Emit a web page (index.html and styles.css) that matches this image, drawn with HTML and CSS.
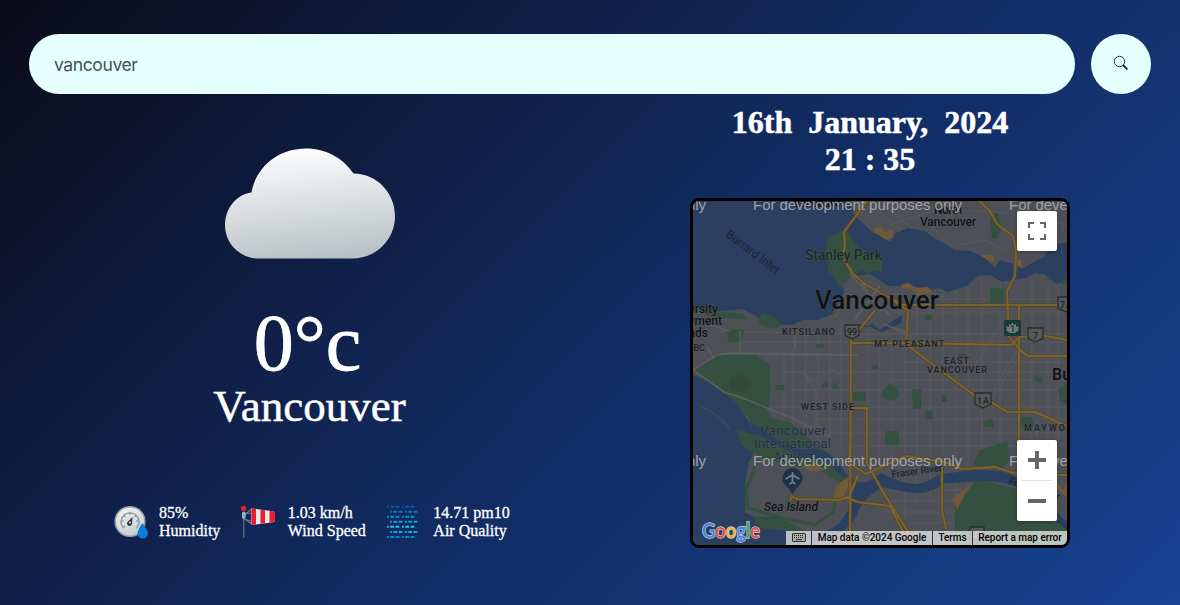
FILE: index.html
```html
<!DOCTYPE html>
<html lang="en">
<head>
<meta charset="utf-8">
<title>Weather</title>
<link rel="stylesheet" href="styles.css">
</head>
<body>
<form class="search">
  <input class="search-input" type="text" value="vancouver" aria-label="City">
  <button class="search-button" type="button" aria-label="Search">
    <svg width="16" height="16" viewBox="0 0 16 16"><circle cx="6.5" cy="6.5" r="5.2" fill="none" stroke="#20302e" stroke-width="1"/><path d="M10.4 10.4L14 14" stroke="#111" stroke-width="1.7" stroke-linecap="round"/></svg>
  </button>
</form>
<main class="content">
  <section class="weather">
    <svg class="cloud" width="170" height="111" viewBox="0 0 170 111">
      <defs><linearGradient id="cloud" x1=".42" y1="0" x2=".58" y2="1"><stop offset="0" stop-color="#fdfdfe"/><stop offset="1" stop-color="#b9c1c4"/></linearGradient></defs>
      <path d="M33.500 110.500C15 110.500 0 95.500 0 77.500C0 60 11.500 46.500 26.500 44.500C31 19 53 .500 81 .500C101 .500 118 10 128.500 25.500C152 25.500 170 45 170 68C170 92 151 110.500 127 110.500Z" fill="url(#cloud)"/>
    </svg>
    <div class="temperature">0°c</div>
    <div class="city">Vancouver</div>
    <div class="stats">
      <div class="stat">
        <svg width="36" height="36" viewBox="0 0 36 36">
          <defs><linearGradient id="metal" x1="0" y1="0" x2=".4" y2="1"><stop offset="0" stop-color="#f5f5f5"/><stop offset="1" stop-color="#c8cfd2"/></linearGradient></defs>
          <circle cx="20" cy="17.500" r="14.800" fill="url(#metal)" stroke="#98a0a5" stroke-width="1.600"/>
          <path d="M13.500 24A9 9 0 1 1 26.500 24" fill="none" stroke="#87939b" stroke-width="1.300"/>
          <path d="M20 8V11M11 17H14M26 17h3M13.500 11l2 2M26.500 11l-2 2M13 24l2-2" stroke="#87939b" stroke-width="1.200"/>
          <path d="M22.500 13L18 17.500a2.500 2.500 0 1 0 4 2.500Z" fill="#32383d"/><circle cx="20" cy="18.500" r="1.100" fill="#ccd2d6"/>
          <path d="M32.500 19C30 23 27.500 26 27.500 29.300a5.200 5.200 0 0 0 10.400 0C37.900 26 35 23 32.500 19Z" fill="#087fe0"/>
        </svg>
        <div>85%<br>Humidity</div>
      </div>
      <div class="stat">
        <svg width="36" height="36" viewBox="0 0 36 36">
          <path d="M4.700 5V34" stroke="#58646f" stroke-width="1.600"/>
          <path d="M4.500 12L12.500 5V20L4.500 14M4.500 10L12.500 9M4.500 15L12.500 17" fill="none" stroke="#6c7d8b" stroke-width="1.200"/>
          <path d="M12.500 4.500L34 7.200Q36 7.500 36 9.500V16Q36 18 34 18.200L12.500 21Z" fill="#e9eaed"/>
          <path d="M12.500 4.500L17 5V20.400L12.500 21ZM21.500 5.600L26 6.200V19.200L21.500 19.800ZM30.500 6.800L34 7.200Q36 7.500 36 9.500V16Q36 18 34 18.200L30.500 18.700Z" fill="#ee1c2e"/>
          <rect x="3" y="8" width="3.600" height="6.500" rx="1" fill="#9bb1c0"/><circle cx="4.700" cy="4.500" r="2.700" fill="#e3202d"/>
        </svg>
        <div>1.03 km/h<br>Wind Speed</div>
      </div>
      <div class="stat">
        <svg width="36" height="36" viewBox="0 0 36 36" fill="none" stroke-width="2" stroke-dasharray="1.800 1.500 3.800 1.500 3.800 2.600">
          <path d="M3 2.800H32" stroke="#0b5a9e"/><path d="M6 7.800H35" stroke="#0875c8"/><path d="M3 12.800H32" stroke="#0990d4"/><path d="M6 17.800H35" stroke="#07a8d2"/><path d="M3 22.800H32" stroke="#18cde6"/><path d="M6 27.900H35" stroke="#08afd8"/><path d="M3 32.900H32" stroke="#088bcc"/>
        </svg>
        <div>14.71 pm10<br>Air Quality</div>
      </div>
    </div>
  </section>
  <section class="place">
    <div class="date">16th&nbsp; January,&nbsp; 2024<br>21 : 35</div>
    <div class="map">
      <svg class="map-canvas" width="374" height="344" viewBox="693 201 374 344">
        <rect x="693" y="201" width="374" height="344" fill="#4d5056"/>
        <g class="street">
          <path d="M784 350V425M793 350V425M806 328V430M818 330V450M830 325V450M841 318V450M868 330V450M879 340V460M892 340V460M905 330V520M917 290V500M930 290V500M943 290V505M956 290V545M968 288V530M982 280V470M1000 280V470M1032 280V470M1048 285V470M1058 285V440"/>
          <path d="M720 331L860 334H1067M740 342H1067M725 355H858M783 372H1067M790 390H1067M770 407H1067M815 419H1067M830 433H1067M850 446H1067M860 299H1067M880 312H1067M900 362H1067M885 380H1067M890 490H970M890 501H960M885 512H960M910 523H960"/>
          <path d="M800 372L815 381L831 369L842 375M804 372L816 392V430M985 410L1020 355M973 370L1005 315M993 390L1020 346M700 350L708 360M875 208L900 230L925 240M880 201L935 248M905 201L955 250M890 225L935 210M930 230L960 210L1007 213M960 245L985 240L1005 250M1020 215L1067 225M1025 245L1048 230M1040 201V245"/>
        </g>
        <g fill="#345040">
          <path d="M718 355L757 355L770 365V405L766 413L735 398L713 388L693 370ZM759 313L775 316L781 325L775 329L759 324ZM693 309L743 314L748 319L715 318Z"/>
          <path d="M727 329L745 330L741 342H728ZM775 385h9v5h-9ZM816 344h8v4h-8ZM822 385l6-4v6h-6ZM853 392h13v9h-13ZM831 384l6-1 2 6h-6ZM872 365h6v4h-6Z"/>
          <path d="M882 392L890 383L899 391L899 398L888 401L882 397ZM912 389h9v20h-8ZM942 395h4v7h-4ZM925 411h8v8h-8ZM983 421l9-2 2 8h-10ZM1021 417h12v10h-12ZM1035 375l9 4-3 5-7-4ZM1058 390l9-7v22l-7-5ZM885 431h14v14h-14ZM974 464L980 450L1007 441L1010 459L1002 469L974 466ZM955 498L967 490L977 479L1012 488L1032 495V545H955ZM1022 500L1067 530V545H1022Z"/>
          <path d="M990 288h14v16h-14ZM990 220l7-8 5 15-5 12h-5ZM930 201l10 1-2 4h-10ZM1027 221l12 12-6 10ZM1046 272l21-6v19l-19-5ZM1030 270l9-8 10 4-8 9ZM958 354h9v4h-9ZM925 315h7v5h-7Z"/>
        </g>
        <path fill="#344939" d="M730 379L741 374L754 383L742 395L730 389Z"/>
        <path class="water" d="M693 201H851L853 214L865 225L872 232L886 239L890 242L896 233L908 228L925 231L935 239L942 242L955 250L971 251L985 258L995 268L1000 260L1010 263L1018 265L1022 269L1037 260L1045 256L1048 246L1067 242V278L1056 284L1045 274L1035 273L1025 278L1002 282L990 275L978 276L967 286L948 292L938 288L928 291L914 286L908 292L899 286L888 286L880 280L869 274L858 276L851 282L840 300L832 314L818 320L803 320L792 325L782 325L773 316L762 313L759 318L743 309L718 311L693 307Z"/>
        <path class="water" d="M858 321L867 318L880 330L902 315V323L882 332L870 327L860 327Z"/>
        <path class="water" d="M693 375L712 383L725 393L739 405L747 419L760 440L749 462L745 485L745 513L756 517L774 517L793 525L808 535L800 545H693Z"/>
        <path d="M712 384L745 393L768 411L772 419L790 422L812 441L834 457L848 476L842 487L818 469L786 466L758 455L741 445L736 429L755 435L748 417L735 402Z" fill="#345040"/>
        <path d="M760 455L785 463L820 468L840 482L833 512L815 525L778 517L748 508L746 490Z" fill="#4d5056" stroke="#345040" stroke-width="3"/>
        <path class="water" d="M752 423C773 435 783 447 803 450C824 445 835 458 847 475C858 488 870 482 881 473C905 485 920 489 938 475C970 470 999 466 1017 478C1040 490 1050 506 1067 522V530C1046 516 1041 502 1017 487C994 477 967 483 944 483C925 500 903 491 882 487C870 495 862 501 857 515C850 529 833 540 815 542L805 534C827 533 839 528 848 510L851 487L830 463L803 456C780 449 770 440 752 432Z"/>
        <path d="M752 516L780 518L806 531L812 536L800 539L783 530L760 528Z" fill="#345040"/>
        <path fill="#705a38" d="M872 229l9-2 4 5 8-3v8l-7 3-10-7ZM900 285l9-2 6 5 13-1 5 5-14 4-7-5-8 2ZM980 255l13 0 2 8-8-3ZM1014 260h7l1 8-6-2ZM834 317l5-8-2 8ZM836 486l14-11-2 12-7 15-8-1ZM953 498l21-16-9 12-8 16ZM816 463l9 7-15 1-8-5ZM1055 480l8 10 4-5v12l-10-8Z"/>
        <path d="M828 238L842 230L848 232L858 247L883 262L881 272L874 270L868 274L861 270L850 280L846 289L839 286L833 276L827 270L829 260L825 255Z" fill="#345040"/>
        <path d="M842 286L852 276L866 287L875 279L890 290L905 288L918 292L900 304L885 315L868 326L857 324L857 310L848 298Z" fill="#4d5056"/>
        <path d="M870 201H1067V217L1030 207L980 211L943 207Z" fill="#4d5056" opacity=".45"/>
        <path class="road-edge" d="M867 201L844 232L845 244L843 258L853 274L865 284L888 297L903 305H1067M875 310L851 340L850 545M851 343H906L1012 345L1019 337L1046 336L1067 340M888 297L908 311L906 344L915 351L975 396L990 401L1007 412H1035L1067 426M979 201L989 210L998 225L1013 236L1016 250L1015 276L1007 291L1009 337L1020 350L1028 356H1067M1019 304V440M851 408H867V463L883 492L910 535M850 447L849 463L866 474L906 456L945 462L962 469L995 467L1020 475H1067M858 475L849 497L839 500L798 499L791 496V500M845 497L858 502L890 506L910 545M942 467V510L946 529"/>
        <path class="road" d="M867 201L844 232L845 244L843 258L853 274L865 284L888 297L903 305H1067M875 310L851 340L850 545M851 343H906L1012 345L1019 337L1046 336L1067 340M888 297L908 311L906 344L915 351L975 396L990 401L1007 412H1035L1067 426M979 201L989 210L998 225L1013 236L1016 250L1015 276L1007 291L1009 337L1020 350L1028 356H1067M1019 304V440M851 408H867V463L883 492L910 535M850 447L849 463L866 474L906 456L945 462L962 469L995 467L1020 475H1067M858 475L849 497L839 500L798 499L791 496V500M845 497L858 502L890 506L910 545M942 467V510L946 529"/>
        <path class="local-road" d="M693 370L717 355L730 353L858 355M693 370L724 392L740 397L772 410L790 417L830 437M740 331V354M693 320L730 331M850 274L890 316M860 280L878 309M880 286L855 319M795 335V350M707 347L713 357M883 324L907 333M1037 420V437"/>
        <path d="M698 405Q714 411 730 428" fill="none" stroke="#355945" stroke-width="1.200"/>
        <path d="M700 466L752 448" stroke="#355149" stroke-dasharray="3 3"/>
        <g class="shields">
          <path d="M845 325h14v10l-7 4-7-4ZM1028 328h15v10l-7.500 4-7.500-4ZM975 393h16v11l-8 4-8-4ZM1058 297h16v11l-8 4-8-4ZM970 527h14v12h-14Z"/>
          <text x="847" y="335" textLength="10">99</text><text x="1033" y="339">7</text><text x="977" y="404" textLength="12">1A</text><text x="1060" y="308" textLength="12">7A</text>
        </g>
        <rect x="1004" y="320" width="17" height="16" rx="1" fill="#183c31"/><path d="M1012.500 322l1.500 3 2-1 0 3 3-1-1 3 1 1-4 3h-5l-4-3 1-1-1-3 3 1 0-3 2 1Z" fill="#747a78"/><text class="shield-number" x="1010" y="332">1</text>
        <g class="map-label">
          <text x="793" y="207" textLength="52" class="strong">Vancouver</text>
          <text x="934" y="214" textLength="28">North</text><text x="920" y="226" textLength="56">Vancouver</text>
          <text class="park" x="805" y="260" textLength="77">Stanley Park</text>
          <text class="inlet" transform="translate(725 236) rotate(37)" textLength="64">Burrard Inlet</text>
          <text class="capital" x="815" y="309" textLength="124">Vancouver</text>
          <text class="district" x="782" y="335" textLength="53">KITSILANO</text>
          <text class="district" x="874" y="347" textLength="70">MT PLEASANT</text>
          <text class="district" x="944" y="364" textLength="25">EAST</text><text class="district" x="927" y="373" textLength="60">VANCOUVER</text>
          <text class="district" x="801" y="410" textLength="53">WEST SIDE</text>
          <text class="district" x="1024" y="431" textLength="57">MAYWOOD</text>
          <text class="university" x="718" y="313">University</text><text class="university" x="722" y="325">Endowment</text><text class="university" x="708" y="337">Lands</text><text class="district ubc" x="705" y="351">UBC</text>
          <text class="burnaby" x="1052" y="380">Burnaby</text>
          <text class="airport" x="760" y="435" textLength="66">Vancouver</text><text class="airport" x="754" y="448" textLength="77">International</text><text class="airport" x="773" y="461" textLength="41">Airport</text>
          <text class="island" x="764" y="511" textLength="54">Sea Island</text>
          <text class="river" transform="translate(892 478) rotate(-8)" textLength="51">Fraser River</text>
          <text class="river" transform="translate(1008 484) rotate(18)">Fraser River</text>
        </g>
        <path d="M792.500 468a10 10 0 0 0-10 10c0 8 7 8 10 17c3-9 10-9 10-17a10 10 0 0 0-10-10Z" fill="#203249"/>
        <path d="M792.500 472v10M785.500 479l7-4 7 4M789.500 484l3-2 3 2" fill="none" stroke="#74818d" stroke-width="1.700"/>
        <g class="development">
          <text x="497" y="210" textLength="209">For development purposes only</text><text x="753" y="210" textLength="209">For development purposes only</text><text x="1009" y="210" textLength="209">For development purposes only</text>
          <text x="497" y="466" textLength="209">For development purposes only</text><text x="753" y="466" textLength="209">For development purposes only</text><text x="1009" y="466" textLength="209">For development purposes only</text>
        </g>
        <text class="google" x="702" y="538" textLength="58" lengthAdjust="spacingAndGlyphs"><tspan fill="#4285e8">G</tspan><tspan fill="#e94b45">o</tspan><tspan fill="#eeb33b">o</tspan><tspan fill="#4285e8">g</tspan><tspan fill="#39a852">l</tspan><tspan fill="#e94b45">e</tspan></text>
      </svg>
      <button class="fullscreen" type="button" aria-label="Fullscreen"><svg width="18" height="18" viewBox="0 0 18 18"><path d="M1 6V1H6M12 1H17V6M17 12V17H12M6 17H1V12" fill="none" stroke="#666" stroke-width="2"/></svg></button>
      <div class="zoom">
        <button type="button" aria-label="Zoom in"><svg width="18" height="18"><path d="M9 0V18M0 9H18" stroke="#666" stroke-width="4"/></svg></button>
        <button type="button" aria-label="Zoom out"><svg width="18" height="18"><path d="M0 9H18" stroke="#666" stroke-width="4"/></svg></button>
      </div>
      <div class="credits">
        <span class="keyboard"><svg width="14" height="9" viewBox="0 0 14 9"><rect x=".5" y=".5" width="13" height="8" rx=".5" fill="#aaa" stroke="#333"/><path d="M2 2.500H12M2 4.500H12" stroke="#222" stroke-dasharray="1 1"/><path d="M4 6.700H10" stroke="#222"/></svg></span>
        <span class="copyright">Map data ©2024 Google</span><span class="terms">Terms</span><span class="report">Report a map error</span>
      </div>
    </div>
  </section>
</main>
</body>
</html>
```
FILE: styles.css
```css
* { box-sizing: border-box; }
body {
  margin: 0;
  height: 605px;
  padding: 34px 29px 0;
  overflow: hidden;
  color: #fff;
  font-family: "Liberation Serif", serif;
  background: linear-gradient(135deg, #0a0b19 0%, #112758 45%, #174393 100%);
}
button { padding: 0; border: 0; display: flex; align-items: center; justify-content: center; }
.search { display: flex; gap: 16px; margin: 0; }
.search-input {
  flex: 1; height: 60px; border: 0; border-radius: 30px; padding: 0 25px;
  background: #e5fffc; color: #495057; font: 17.6px Inter, sans-serif; letter-spacing: -.45px;
}
.search-button { width: 60px; height: 60px; border-radius: 50%; background: #e5fffc; padding-bottom: 2px; }
.content { display: grid; grid-template-columns: 1fr 1fr; }
.weather { padding-top: 54px; display: flex; flex-direction: column; align-items: center; }
.cloud { display: block; }
.temperature { margin-top: 43px; margin-right: 4px; font-size: 80px; line-height: 83px; -webkit-text-stroke: .8px #fff; }
.city { font-size: 45px; line-height: 42px; -webkit-text-stroke: .5px #fff; }
.stats { align-self: flex-start; display: flex; gap: 18.5px; margin: 77px 0 0 81px; font-size: 16px; line-height: 18px; white-space: nowrap; -webkit-text-stroke: .3px #fff; }
.stat { display: flex; gap: 13px; }
.stat svg { overflow: visible; }
.place { padding-top: 10px; }
.date { margin-right: 1px; text-align: center; font-size: 32px; font-weight: 700; line-height: 37px; -webkit-text-stroke: .5px #fff; }
.map { position: relative; width: 380px; height: 350px; margin: 20px 0 0 100px; border: 3px solid #000; border-radius: 9px; overflow: hidden; }
.map-canvas { display: block; font-family: Roboto, sans-serif; }
.street { fill: none; stroke: #5a5b5e; stroke-width: 1; }
.water { fill: #2b3f60; }
.road-edge { fill: none; stroke: #554729; stroke-width: 3.6; stroke-linejoin: round; }
.road { fill: none; stroke: #7b632f; stroke-width: 2; stroke-linejoin: round; }
.local-road { fill: none; stroke: #5d5e60; stroke-width: 1.6; }
.shields path { fill: #55575a; stroke: #292c30; stroke-width: 1.3; }
.shields text { fill: #222; font-size: 9px; font-weight: 500; }
.shield-number { fill: #183c31; font-size: 9px; font-weight: 700; }
.map-label { fill: #101214; font-size: 12px; font-weight: 500; stroke: #5b5e64; stroke-width: .7px; paint-order: stroke; }
.strong { font-weight: 700; }
.park { fill: #182c24; font-size: 14px; }
.inlet { fill: #1b2737; font-size: 12px; font-weight: 400; stroke: none; }
.capital { font-size: 26px; font-weight: 500; }
.district { font-size: 9px; font-weight: 600; fill: #202224; }
.university { font-size: 12px; text-anchor: end; }
.ubc { text-anchor: end; }
.burnaby { font-size: 16px; font-weight: 600; }
.airport { font-size: 13.5px; fill: #202f44; font-weight: 400; }
.island { font-size: 12px; font-style: italic; }
.river { font-size: 10px; fill: #1d2938; stroke: none; }
.development { font-family: "Liberation Sans", sans-serif; font-size: 15px; fill: #a1a3a6; }
.google { font-family: Lato, sans-serif; font-size: 21px; font-weight: 600; stroke: #c9cdd1; stroke-width: 1.4px; paint-order: stroke; }
.fullscreen, .zoom { position: absolute; right: 10px; width: 40px; background: #fff; border-radius: 2px; box-shadow: 0 1px 4px rgba(0,0,0,.3); }
.fullscreen { top: 10px; height: 40px; }
.zoom { top: 239px; height: 81px; }
.zoom button { width: 40px; height: 40px; background: transparent; }
.zoom button + button { width: 30px; height: 41px; margin: 0 5px; border-top: 1px solid #e0e0e0; }
.credits { position: absolute; right: 0; bottom: 0; display: flex; height: 14px; color: #000; background: rgba(245,245,245,.7); font: 500 10px/14px Roboto, sans-serif; letter-spacing: -.04px; white-space: nowrap; }
.credits span { border-left: 1px solid #333; text-align: center; }
.credits .keyboard { width: 25px; border: 0; padding-top: 2px; line-height: 0; }
.copyright { width: 121px; }
.terms { width: 40px; }
.report { width: 95px; }
```
